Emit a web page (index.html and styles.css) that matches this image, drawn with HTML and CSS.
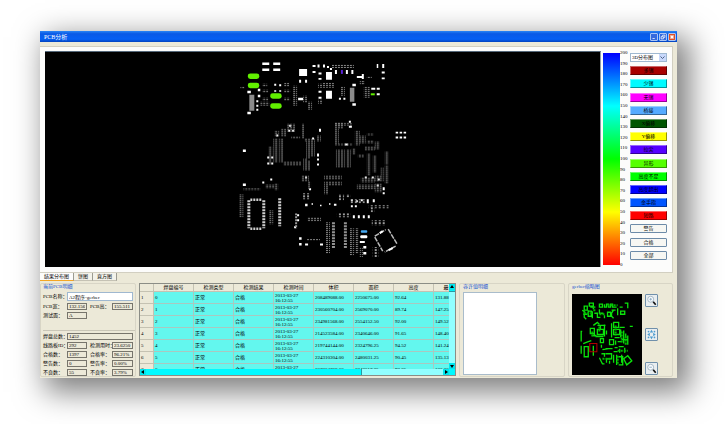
FILE: index.html
```html
<!DOCTYPE html>
<html lang="zh-CN">
<head>
<meta charset="utf-8">
<title>PCB分析</title>
<link rel="stylesheet" href="styles.css">
</head>
<body>
<main class="window">
  <header class="titlebar">
    <h1>PCB分析</h1>
    <div class="window-buttons">
      <button class="win-btn" aria-label="最小化"><svg viewBox="0 0 8 8"><path d="M2 6h3"/></svg></button>
      <button class="win-btn" aria-label="还原"><svg viewBox="0 0 8 8"><path d="M3.500 3V1.500h3v3H5M1.500 3.500h3v3h-3z"/></svg></button>
      <button class="win-btn close" aria-label="关闭"><svg viewBox="0 0 8 8"><path d="M2 2l4 4M6 2l-4 4"/></svg></button>
    </div>
  </header>

  <section class="workspace">
    <div class="board">
      <svg viewBox="45 51 557 216" role="img" aria-label="PCB">
        <defs>
          <pattern id="dots" width="3" height="2" patternUnits="userSpaceOnUse"><rect width="2" height="1" fill="#8c8c8c"/></pattern>
          <pattern id="loose" width="4" height="3" patternUnits="userSpaceOnUse"><rect width="2" height="2" fill="#9a9a9a"/></pattern>
        </defs>
        <g fill="#fff">
          <path d="M263 61.500h7v2.500h-7zM274 61.500h7v2.500h-7zM263 67.500h7v2.500h-7zM274 67.500h7v2.500h-7z"/>
          <path d="M300 68h8v7h-8zM300 79h2v3h-2zM306 79h2v3h-2zM327 71h6v8h-6zM327 90h6v8h-6zM299 97h5v2.500h-5z"/>
          <path d="M313.500 64h3v2h-3zM318.500 63.500h2v3h-2zM324 63.500h2v3h-2zM313.500 70h3v2h-3zM319.500 71.500h3v2h-3zM319.500 77h3v2h-3zM319.500 90h3v2h-3zM319.500 96h3v2h-3zM328 65h2v2h-2zM331 67h2v2h-2z"/>
          <path d="M336 69h2v4h-2zM347 69h2v4h-2zM352.500 69h2v4h-2zM358 75h7v2h-7zM363 73h2v5h-2zM378 63h1.500v4H378zM383.500 63h2v4h-2zM383 70.500h3v2h-3zM383 76.500h3v2h-3z"/>
          <path d="M353.500 83h3.500v2.500h-3.500zM353.500 102.500h3.500v2.500h-3.500zM340 97h2v2h-2zM344.500 97h2v2h-2zM372.500 87h4v2h-4zM378 87h3v2h-3zM378 92.500h3v2h-3z"/>
          <path d="M248 90h3.500v2.500H248zM248 111h3.500v2.500H248zM258.500 88h2.500v2.500h-2.500zM258.500 94h2.500v2.500h-2.500zM257 99.500h2v2h-2zM257 104h2v2h-2zM257 108h2v2h-2zM275 89.500h2v1.500h-2zM280 89.500h2v1.500h-2zM275 83h2v2h-2zM280 83.500h2v2h-2z"/>
          <path d="M243.500 149h3v2.500h-3zM243.500 183h3v2.500h-3zM268 156h2v2h-2zM272 156h2v2h-2zM268 162h2v2h-2zM272 162h2v2h-2zM277 134h2v2h-2zM290 124h2v2h-2zM289 129h2v2h-2zM293 129h2v2h-2zM313 137h2v2h-2zM320 128h2v3h-2zM318 153h2v3h-2zM318 158h2v2h-2zM318 163h2v2h-2zM350 120h2v2h-2zM350 125h3v2h-3zM346 143h3v2h-3z"/>
          <path d="M397 131h2.500v2H397zM401 131h2.500v2H401zM405 131h2.500v2H405zM397 136h2.500v2H397zM401 136h2.500v2H401zM405 136h2.500v2H405z"/>
          <path d="M263 181h2v2h-2zM271 178h2v2h-2zM306 176h2v2h-2zM310 188h2v2h-2zM366 176h2v2h-2zM373 176h2v2h-2zM379 178h2v2h-2zM384 187h2v3h-2zM384 192h2v2h-2zM378 184h2v2h-2z"/>
          <path d="M306 203.500h2.500v2.500H306zM312.500 203h1.500v1.500h-1.500zM321 204.500h1.500v1.500H321zM330 203h1.500v1.500H330zM335 203.500h2.500v2H335zM352 199h2v2h-2zM357 200h2v2h-2zM362 199h2v2h-2zM368 199h2v4h-2zM374 199h2v3h-2zM352 205h2v2h-2zM356 205h2v2h-2zM354 215h2v3h-2zM359 215h2v3h-2zM364 215h2v3h-2zM369 215h2v3h-2z"/>
          <path d="M298 214h2v2h-2zM298 219h2v2h-2zM295 226h2v2h-2zM300 237h2.500v2.500H300zM300 243h2.500v2.500H300zM306 243.500h3v2h-3zM321 243.500h3v2h-3zM361 241h5v2h-5zM364.500 246h3v2.500h-3zM364.500 252h3v2.500h-3z"/>
          <rect x="361.500" y="235" width="7" height="3" rx="1"/>
        </g>
        <g fill="#61ef00">
          <rect x="248.500" y="72.500" width="11.500" height="5.500" rx="2.500"/>
          <rect x="248.500" y="82" width="11.500" height="5.500" rx="2.500"/>
          <rect x="271" y="92.500" width="11.500" height="5.500" rx="2.500"/>
          <rect x="271" y="102.500" width="11.500" height="5.500" rx="2.500"/>
          <rect x="372" y="92.500" width="4" height="2"/>
        </g>
        <rect x="342" y="69" width="2" height="4" fill="#5a22d8"/>
        <rect x="362" y="230" width="6.500" height="2.500" rx="1" fill="#45a9f2"/>
        <g fill="#8b8b8b"><path d="M250 94h5v16h-5zM351 87h4.500v14H351z"/></g>
        <path fill="url(#dots)" d="M263 83h5v3h-5zM263 89h6v3h-6zM263 97h6v3h-6zM261 101h9v4h-9zM285 82h5v4h-5zM285 89h6v3h-6zM285 97h6v3h-6zM294 85h4v20h-4zM304 95h4v7h-4zM309 101h4v8h-4zM333 63h22v4h-22zM323 82h12v5h-12zM319 83h4v4h-4zM342 86h4v9h-4zM361 80h5v4h-5zM368 75h5v2h-5zM365 86h6v11h-6zM241 86h4v2h-4zM319 99h4v4h-4zM336 122h17v3h-17z"/>
        <path fill="url(#dots)" d="M274 138h5v24h-5zM280 138h4v24h-4zM269 146h4v18h-4zM282 128h5v8h-5zM288 123h8v8h-8zM275 130h5v6h-5zM303 123h2v15h-2zM292 136h9v2h-9zM305 138h10v3h-10zM307 138h4v20h-4zM311 138h5v18h-5zM318 135h4v6h-4zM284 161h18v4h-18zM304 158h4v12h-4zM308 160h3v10h-3z"/>
        <path fill="url(#dots)" d="M336 122h8v6h-8zM336 128h4v16h-4zM336 143h18v2h-18zM356 130h5v15h-5zM361 135h6v8h-6zM368 133h7v2h-7zM368 140h7v3h-7zM337 149h4v18h-4zM342 149h4v18h-4zM347 149h5v18h-5zM353 148h4v6h-4zM366 146h10v4h-10zM376 141h5v8h-5zM368 153h4v22h-4zM374 155h4v17h-4zM386 151h4v13h-4zM386 165h4v18h-4zM382 167h3v8h-3zM359 154h6v3h-6z"/>
        <path fill="url(#dots)" d="M302 175h8v6h-8zM309 181h3v8h-3zM325 175h18v4h-18zM325 181h18v4h-18zM325 185h4v9h-4zM244 188h17v2h-17zM266 184h12v4h-12zM275 183h4v7h-4zM358 184h18v5h-18zM362 177h14v5h-14zM376 175h9v6h-9zM376 183h7v9h-7zM240 194h4v23h-4zM270 210h4v14h-4z"/>
        <path fill="url(#loose)" d="M303 193h8v6h-8zM340 194h5v6h-5zM346 194h6v3h-6zM351 199h15v4h-15zM370 205h20v3h-20zM372 207h4v5h-4zM338 213h14v4h-14zM295 213h4v15h-4zM373 220h14v5h-14zM374 247h6v10h-6z"/>
        <path fill="url(#dots)" d="M308 217h14v4h-14zM327 222h4v32h-4zM351 228h4v28h-4zM356 228h4v26h-4zM361 247h3v10h-3z"/>
        <g fill="none" stroke="#cfcfcf" stroke-dasharray="2 1">
          <path stroke-width="3" d="M249.500 200v28M264.500 200v28M280.500 198v28"/>
          <path stroke-width="2.500" d="M251 199.500h11M251 228.500h11"/>
          <path stroke-width="3" stroke="#929292" d="M334.500 222v26M346.500 222v26"/>
          <path stroke-width="1" stroke="#888" d="M308 239.500h13"/>
        </g>
        <g fill="none" stroke="#bcbcbc" stroke-width="1.500" stroke-dasharray="5 1">
          <path d="M376 236l11-6.500M389.500 229l9 15M397 246l-11 6M376 237l8 14"/>
        </g>
        <path fill="none" stroke="#fff" stroke-width="2" d="M381 233l3-2M390 250l4-2"/>
      </svg>
    </div>

    <div class="color-bar"></div>
    <ol class="scale">
      <li>200</li><li>190</li><li>180</li><li>170</li><li>160</li><li>150</li><li>140</li>
      <li>130</li><li>120</li><li>110</li><li>100</li><li>90</li><li>80</li><li>70</li>
      <li>60</li><li>50</li><li>40</li><li>30</li><li>20</li><li>10</li><li>0</li>
    </ol>

    <div class="filters">
      <div class="picker">
        <select aria-label="分布图"><option>3D分布图</option></select>
        <svg class="chevron" viewBox="0 0 7 7"><path d="M1.500 2.500l2 2 2-2"/></svg>
      </div>
      <button class="filter dark-red">多锡</button>
      <button class="filter cyan">少锡</button>
      <button class="filter magenta">无锡</button>
      <button class="filter sky">桥接</button>
      <button class="filter dark-green">X偏移</button>
      <button class="filter yellow">Y偏移</button>
      <button class="filter violet">拉尖</button>
      <button class="filter lime">异形</button>
      <button class="filter green">高度不足</button>
      <button class="filter blue">高度超出</button>
      <button class="filter azure">金手指</button>
      <button class="filter red">短路</button>
      <button class="filter plain">警告</button>
      <button class="filter plain">合格</button>
      <button class="filter plain">全部</button>
    </div>
  </section>

  <nav class="tabs">
    <button class="tab active">结果分布图</button>
    <button class="tab">饼图</button>
    <button class="tab">直方图</button>
  </nav>

  <section class="details">
    <form class="group info">
      <h2>当前PCB明细</h2>
      <div class="fields summary">
        <label for="name">PCB名称：</label><input class="wide editable" id="name" value="A2程序-gerber">
        <label for="w">PCB宽：</label><input id="w" readonly value="132.156">
        <label class="second" for="h">PCB高：</label><input id="h" readonly value="155.511">
        <label for="side">测试面：</label><input id="side" readonly value="A">
      </div>
      <div class="fields stats">
        <label for="total">焊盘总数：</label><input class="wide" id="total" readonly value="1452">
        <label for="bid">线路板ID：</label><input id="bid" readonly value="292">
        <label class="second" for="time">检测用时：</label><input id="time" readonly value="23.6250">
        <label for="ok">合格数：</label><input id="ok" readonly value="1397">
        <label class="second" for="okr">合格率：</label><input id="okr" readonly value="96.21%">
        <label for="warn">警告数：</label><input id="warn" readonly value="0">
        <label class="second" for="warnr">警告率：</label><input id="warnr" readonly value="0.00%">
        <label for="bad">不良数：</label><input id="bad" readonly value="55">
        <label class="second" for="badr">不良率：</label><input id="badr" readonly value="3.79%">
      </div>
    </form>

    <div class="grid-view">
      <div class="table-clip">
        <table>
          <colgroup><col class="index-col"><col span="8"></colgroup>
          <thead><tr><th></th><th>焊盘编号</th><th>检测类型</th><th>检测结果</th><th>检测时间</th><th>体积</th><th>面积</th><th>高度</th><th>最大高度</th></tr></thead>
          <tbody>
            <tr><th>1</th><td>0</td><td>正常</td><td>合格</td><td>2013-03-27<br>16:12:55</td><td>208489088.00</td><td>2250675.00</td><td>92.64</td><td>131.88</td></tr>
            <tr><th>2</th><td>1</td><td>正常</td><td>合格</td><td>2013-03-27<br>16:12:55</td><td>230560704.00</td><td>2569070.00</td><td>89.74</td><td>147.25</td></tr>
            <tr><th>3</th><td>2</td><td>正常</td><td>合格</td><td>2013-03-27<br>16:12:55</td><td>234981568.00</td><td>2554152.50</td><td>92.00</td><td>149.52</td></tr>
            <tr><th>4</th><td>3</td><td>正常</td><td>合格</td><td>2013-03-27<br>16:12:55</td><td>214523584.00</td><td>2340646.00</td><td>91.65</td><td>148.40</td></tr>
            <tr><th>5</th><td>4</td><td>正常</td><td>合格</td><td>2013-03-27<br>16:12:55</td><td>219744144.00</td><td>2324796.25</td><td>94.52</td><td>141.24</td></tr>
            <tr><th>6</th><td>5</td><td>正常</td><td>合格</td><td>2013-03-27<br>16:12:55</td><td>224310304.00</td><td>2480031.25</td><td>90.45</td><td>135.13</td></tr>
            <tr><th>7</th><td>6</td><td>正常</td><td>合格</td><td>2013-03-27<br>16:12:55</td><td>207364768.00</td><td>2243617.25</td><td>93.25</td><td>133.20</td></tr>
          </tbody>
        </table>
      </div>
      <div class="vbar">
        <button aria-label="向上"><svg viewBox="0 0 6 6"><path d="M1 4l2-3 2 3z"/></svg></button>
        <span class="v-thumb"></span>
        <button class="end" aria-label="向下"><svg viewBox="0 0 6 6"><path d="M1 2l2 3 2-3z"/></svg></button>
      </div>
      <div class="hbar">
        <button aria-label="向左"><svg viewBox="0 0 6 6"><path d="M4 1l-3 2 3 2z"/></svg></button>
        <span class="h-thumb"></span>
        <button class="end" aria-label="向右"><svg viewBox="0 0 6 6"><path d="M2 1l3 2-3 2z"/></svg></button>
      </div>
      <span class="corner"></span>
    </div>

    <section class="group">
      <h2>容许值明细</h2>
      <div class="blank-box"></div>
    </section>

    <section class="group">
      <h2>gerber缩略图</h2>
      <div class="preview">
        <svg class="thumb" viewBox="571 294 69 80" role="img" aria-label="gerber">
          <g fill="none" stroke="#0be20b" stroke-width="1.300">
            <path d="M583 306h3v4h-3zM588 303h4v3h-4zM589 307h3v2M581 310l3 2M582 314h4M583 311v6l2 2M587 310v6h3v-5h-3M591 311v7M593 313h3v4h3M598 304h3v3h-3zM598 309v4h4M603 304v3h2v-3h2v3h2v-3h2v3h4M606 312h3v4h-3zM603 315v3M612 310l-2 3v3l2 2M616 308v7M619 311h4v3h-4zM618 307h3M623 303h3v5M610 310h4"/>
            <path d="M592 325l4-3 2 2M589 328h4v5h-4zM593 328v8M596 325h8M596 329h6v5h-6zM594 336h8M603 324v12M599 325v4M605 330v4M591 335h4M612 322h5v5h-5zM610 323v14M612 329h6v5h-6zM618 327h5M619 329v8M622 330v13M624 333v4M626 335v9M613 337h5M620 339h6M628 326h3"/>
            <path d="M581 331h-1v10M582 343l5-2 3-1M583 346h4v10h-4zM580 345v8M592 345v10M599 338h3v4h-3zM600 344v3M604 348h7M608 339h4v5h-4zM614 340v4M616 341h4M613 347h3M618 348v4M623 347v5M601 349l6-1M612 351h4M617 346h5M600 353h3v3M598 357l3 6h2M604 353h6v5h-5v4M608 360v3M612 354v8M615 354v10M617 356h4v8h-4M620 354v8"/>
            <path d="M622 358l4-3 4 5-5 4z"/>
          </g>
          <g fill="none" stroke="#00b800" stroke-width="2" stroke-dasharray="2 1">
            <path d="M583 313h8M593 306v5M606 305h10M598 314h6M591 331v5M614 325v10M620 331v12M616 350h10M601 358h8M616 355v8M598 326v6M624 336v8"/>
          </g>
          <path fill="none" stroke="#b00000" d="M588.500 343h7v8h-7z"/>
        </svg>
        <div class="tools">
          <button class="tool" aria-label="放大"><svg viewBox="0 0 12 13"><circle cx="5" cy="5" r="3.500" fill="#f8fcff" stroke="#9aaebd"/><path d="M3.500 5h3M5 3.500v3" stroke="#87a6bf"/><path d="M8 8l3 3.500" stroke="#111" stroke-width="2"/></svg></button>
          <button class="tool" aria-label="适应窗口"><svg viewBox="0 0 12 13"><g fill="#4a9bd0"><path d="M6 1l2 3H4zM6 12l2-3H4zM1 6.500l3-2v4zM11 6.500l-3-2v4z"/><circle cx="2.500" cy="3" r="1"/><circle cx="9.500" cy="3" r="1"/><circle cx="2.500" cy="10" r="1"/><circle cx="9.500" cy="10" r="1"/></g></svg></button>
          <button class="tool" aria-label="缩小"><svg viewBox="0 0 12 13"><circle cx="5" cy="5" r="3.500" fill="#f8fcff" stroke="#9aaebd"/><path d="M3.500 5h3" stroke="#87a6bf"/><path d="M8 8l3 3.500" stroke="#111" stroke-width="2"/></svg></button>
        </div>
      </div>
    </section>
  </section>
</main>
</body>
</html>
```
FILE: styles.css
```css
* { box-sizing: border-box; }

body {
  margin: 0;
  height: 100vh;
  padding: 31px 48px 46px 40px;
  background: #fff;
  font: 5px/6px "Liberation Serif", "Noto Sans CJK SC", serif;
  color: #000;
}

h1, h2, ol { margin: 0; padding: 0; font-size: 5px; font-weight: normal; }
button, input, select {
  margin: 0;
  padding: 0;
  border: 0;
  border-radius: 0;
  font: inherit;
  color: inherit;
  min-width: 0;
}
button svg { display: block; width: 100%; height: 100%; }

.window {
  display: flex;
  flex-direction: column;
  height: 100%;
  background: #ece9d8;
  box-shadow: 9px 10px 28px 4px rgba(0, 0, 0, .5);
}

/* Title bar */
.titlebar {
  display: flex;
  flex: none;
  align-items: center;
  justify-content: space-between;
  height: 11px;
  padding: 0 1px 0 4px;
  background: linear-gradient(#2a86f5, #0a5ae6 25%, #0560f4 75%, #0443bd);
  color: #fff;
}
.titlebar h1 { font-size: 6px; line-height: 10px; }
.window-buttons { display: flex; gap: 1px; }
.win-btn {
  width: 8px;
  height: 8px;
  border: 1px solid #a9c5f5;
  border-radius: 1px;
  background: #3569dd;
}
.win-btn svg { fill: none; stroke: #fff; }
.win-btn.close { background: #dc4f28; }
.win-btn.close svg { stroke-width: 2; }

/* Result view */
.workspace {
  display: flex;
  flex: 1;
  min-height: 0;
  margin: 4px 4px 0 0;
  padding: 4px 5px 5px 5px;
  border: solid #d2cfc1;
  border-width: 1px 1px 1px 0;
  background: #fcfcfb;
}
.board {
  flex: 1;
  min-width: 0;
  border-top: 1px solid #55687a;
  border-right: 1px solid #8f9ba5;
  background: #000;
}
.board svg { display: block; width: 100%; height: 100%; }
.color-bar {
  width: 17px;
  margin: 2px 0 2px 2px;
  background: linear-gradient(#00f, #0ff 25%, #0f0 50%, #ff0 75%, #f00);
}
.scale {
  display: flex;
  flex-direction: column;
  justify-content: space-between;
  width: 9px;
  margin: -1px 0 -1px;
  list-style: none;
}
.filters {
  display: flex;
  flex-direction: column;
  justify-content: space-between;
  width: 37px;
  margin: 2px 0 7px 1px;
}
.picker { position: relative; height: 9px; }
.picker select {
  display: block;
  width: 100%;
  height: 9px;
  padding: 0 8px 0 1px;
  border: 1px solid #9fb8d0;
  background: #fff;
  line-height: 7px;
  appearance: none;
}
.chevron {
  position: absolute;
  top: 1px;
  right: 1px;
  width: 7px;
  height: 7px;
  background: #c8d8fb;
  fill: none;
  stroke: #4d6185;
  pointer-events: none;
}
.filter {
  height: 9px;
  border: 1px solid;
  border-color: rgba(255, 255, 255, .4) rgba(0, 0, 0, .4) rgba(0, 0, 0, .4) rgba(255, 255, 255, .4);
  line-height: 7px;
}
.dark-red { background-color: #a80000; }
.cyan { background-color: #00fbff; }
.magenta { background-color: #f0f; }
.sky { background-color: #55aaff; }
.dark-green { background-color: #005500; }
.yellow { background-color: #ff0; }
.violet { background-color: #5500ff; }
.lime { background-color: #55ff00; }
.green { background-color: #00ff00; }
.blue { background-color: #0000ff; }
.azure { background-color: #0055ff; }
.red { background-color: #f00; }
.plain { border: 1px solid #6d8ba8; border-radius: 1px; background-color: #f7f7f3; }

/* Tabs */
.tabs { display: flex; flex: none; height: 8px; }
.tab {
  padding: 0 4px;
  border-right: 1px solid #9b9b91;
  border-bottom: 1px solid #c5c2b4;
  background: #f3f2ea;
  line-height: 7px;
}
.tab.active { border-bottom-color: #f5a623; background: #fcfcfb; }

/* Lower panels */
.details {
  display: grid;
  flex: none;
  grid-template-columns: 96px minmax(0, 1fr) 106px 105px;
  column-gap: 3px;
  padding: 2px 4px 1px 0;
}
.group {
  min-width: 0;
  padding: 0 3px;
  border: 1px solid #d8d5c6;
  border-radius: 2px;
}
.group h2 {
  width: max-content;
  height: 8px;
  background: #ece9d8;
  color: #1550d0;
}
.group.info { padding: 0 0 0 2px; }
.fields {
  display: grid;
  grid-template-columns: 24px 20px 25px 21px;
  white-space: nowrap;
}
.fields label { align-self: center; }
.fields .second { padding-left: 3px; }
.fields input {
  width: 100%;
  height: 7px;
  padding: 0 1px;
  border: 1px solid #77756c;
  background: #ece9d8;
  line-height: 5px;
}
.fields .wide { grid-column: 2 / -1; }
.fields .editable { height: 9px; border-color: #9fb8d0; background: #fff; }
.summary { row-gap: 2px; padding-bottom: 11px; border-bottom: 1px solid #c9c6b7; }
.stats { row-gap: 2px; padding-top: 2px; }

.grid-view {
  display: grid;
  grid-template: minmax(0, 1fr) 6px / minmax(0, 1fr) 6px;
  height: 93px;
  border: 1px solid #8b8d86;
  background: #ece9d8;
}
.table-clip { overflow: hidden; }
table { width: 334px; table-layout: fixed; border-collapse: separate; border-spacing: 0; }
.index-col { width: 14px; }
th, td {
  padding: 0 0 0 1px;
  border: solid #a9c8c0;
  border-width: 0 1px 1px 0;
  font-weight: normal;
  line-height: 5px;
  text-align: left;
  white-space: nowrap;
}
th { border-color: #c5c2b2; background: #ece9d8; }
thead th { height: 8px; padding: 0; text-align: center; }
tbody tr { height: 12px; }
td { background: #63f7ee; }
.vbar, .hbar { display: flex; background: #91ffff; }
.vbar { flex-direction: column; }
.vbar button, .hbar button { flex: none; width: 6px; height: 6px; background: #00e6ee; }
.v-thumb { height: 2px; background: #00f4f8; border-bottom: 1px solid #2999a0; }
.h-thumb { width: 70%; background: #00faff; border-right: 1px solid #2999a0; }
.vbar .end { margin-top: auto; }
.hbar .end { margin-left: auto; }
.corner { background: #00faff; }

.blank-box { width: 74px; height: 83px; border: 1px solid #a9bccb; background: #fff; }
.preview { display: flex; gap: 3px; padding-top: 2px; }
.thumb { width: 70px; height: 81px; background: #000; }
.tools { display: flex; flex-direction: column; justify-content: space-between; }
.tool { width: 13px; height: 13px; border: 1px solid #7090ab; border-radius: 1px; background: #e9eef0; }
```
